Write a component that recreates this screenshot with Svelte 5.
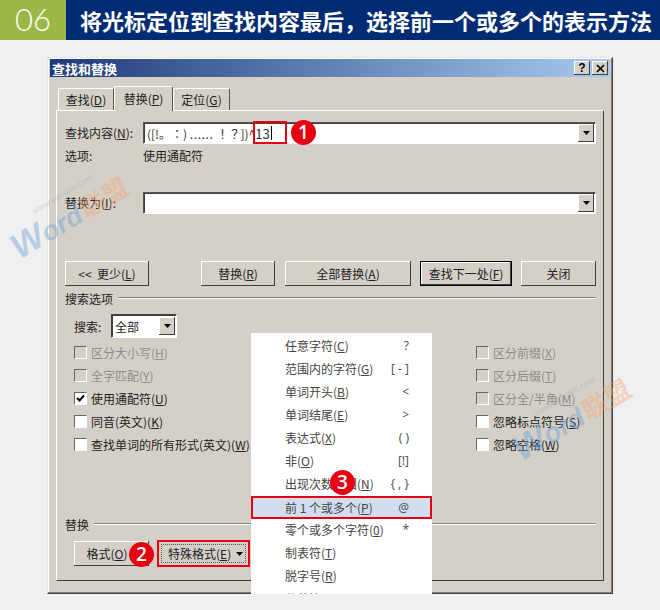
<script>
  const leftChecks = [
    { pre: '区分大小写(', key: 'H', disabled: true },
    { pre: '全字匹配(', key: 'Y', disabled: true },
    { pre: '使用通配符(', key: 'U', checked: true },
    { pre: '同音(英文)(', key: 'K' },
    { pre: '查找单词的所有形式(英文)(', key: 'W' }
  ]
  const rightChecks = [
    { pre: '区分前缀(', key: 'X', disabled: true },
    { pre: '区分后缀(', key: 'T', disabled: true },
    { pre: '区分全/半角(', key: 'M', disabled: true },
    { pre: '忽略标点符号(', key: 'S' },
    { pre: '忽略空格(', key: 'W' }
  ]
  const menuItems = [
    { pre: '任意字符(', key: 'C', code: '?' },
    { pre: '范围内的字符(', key: 'G', code: '[ - ]' },
    { pre: '单词开头(', key: 'B', code: '<' },
    { pre: '单词结尾(', key: 'E', code: '>' },
    { pre: '表达式(', key: 'X', code: '( )' },
    { pre: '非(', key: 'O', code: '[!]' },
    { pre: '出现次数范围(', key: 'N', code: '{ , }' },
    { pre: '前 1 个或多个(', key: 'P', code: '@', active: true },
    { pre: '零个或多个字符(', key: '0', code: '*' },
    { pre: '制表符(', key: 'T', code: '' },
    { pre: '脱字号(', key: 'R', code: '' },
    { pre: '分节符(', key: 'A', code: '' }
  ]
</script>

{#snippet arrow()}
  <svg class="arrow" width="9" height="5" viewBox="0 0 9 5"><path d="M0 0H9L4.5 5Z" fill="#000" /></svg>
{/snippet}

{#snippet dropBtn()}
  <span class="drop">{@render arrow()}</span>
{/snippet}

{#snippet check(item)}
  <label class="check" class:disabled={item.disabled}>
    <span class="box">
      {#if item.checked}
        <svg width="9" height="9" viewBox="0 0 9 9"><path d="M1 4L3.5 6.5L8 1.5" fill="none" stroke="#000" stroke-width="2" /></svg>
      {/if}
    </span>
    <span>{item.pre}<u>{item.key}</u>)</span>
  </label>
{/snippet}

{#snippet watermark(cls)}
  <div class="watermark {cls}">
    <div class="wm-url">www.wordlm.com</div>
    <div class="wm-logo"><span class="wm-w">W</span><span class="wm-ord">ord</span><span class="wm-cn">联盟</span></div>
  </div>
{/snippet}

<div class="page">
  <header class="top">
    <div class="step">06</div>
    <h1>将光标定位到查找内容最后，选择前一个或多个的表示方法</h1>
  </header>

  <div class="dialog">
    <div class="titlebar">
      <span class="title">查找和替换</span>
      <span class="tb-btn">?</span>
      <span class="tb-btn x">
        <svg width="9" height="9" viewBox="0 0 9 9"><path d="M1 1L8 8M8 1L1 8" stroke="#000" stroke-width="1.6" /></svg>
      </span>
    </div>

    <div class="tabs">
      <div class="tab first">查找(<u>D</u>)</div>
      <div class="tab active">替换(<u>P</u>)</div>
      <div class="tab third">定位(<u>G</u>)</div>
    </div>

    <div class="panel">
      <div class="row find">
        <span class="lbl">查找内容(<u>N</u>):</span>
        <div class="input">
          <span class="value">([!。<span class="tc">：</span>)&nbsp;<span class="dots">......</span><span class="tc">！？</span>])^<span class="num">13</span></span><span class="caret"></span>
          {@render dropBtn()}
        </div>
      </div>
      <div class="row opts">
        <span class="lbl">选项:</span>
        <span class="opt-val">使用通配符</span>
      </div>
      <div class="row repl">
        <span class="lbl">替换为(<u>I</u>):</span>
        <div class="input">
          {@render dropBtn()}
        </div>
      </div>

      <div class="actions">
        <button class="less">&lt;&lt;&nbsp; 更少(<u>L</u>)</button>
        <button class="replace">替换(<u>R</u>)</button>
        <button class="replace-all">全部替换(<u>A</u>)</button>
        <button class="next">查找下一处(<u>F</u>)</button>
        <button class="close">关闭</button>
      </div>

      <div class="section s1"><span>搜索选项</span><i></i></div>

      <div class="search">
        <span class="search-lbl">搜索:</span>
        <div class="combo"><span>全部</span>{@render dropBtn()}</div>
      </div>

      <div class="checks">
        <div class="col left">
          {#each leftChecks as item}
            {@render check(item)}
          {/each}
        </div>
        <div class="col">
          {#each rightChecks as item}
            {@render check(item)}
          {/each}
        </div>
      </div>

      <div class="section s2"><span>替换</span><i></i></div>

      <div class="bottom-btns">
        <button class="fmt">格式(<u>O</u>)</button>
        <div class="special-wrap">
          <button class="special"><span class="focus">特殊格式(<u>E</u>)</span>{@render arrow()}</button>
        </div>
      </div>
    </div>
  </div>

  <!-- overlays -->
  {@render watermark('wm-a')}
  {@render watermark('wm-b')}

  <div class="menu">
    {#each menuItems as item}
      <div class="item" class:active={item.active}>
        <span>{item.pre}<u>{item.key}</u>)</span>
        <span class="code">{item.code}</span>
      </div>
    {/each}
  </div>

  <div class="mark" style="left:253px;top:121px;width:34px;height:23px"></div>
  <div class="badge" style="left:291px;top:120px">1</div>
  <div class="badge" style="left:129px;top:542px">2</div>
  <div class="badge" style="left:330px;top:470px">3</div>
</div>

<style>
  :global(body) {
    margin: 0;
    background: #f0f0f0;
  }
  .page {
    position: relative;
    width: 660px;
    height: 610px;
    overflow: hidden;
    background: #f0f0f0;
    font-family: "Noto Sans CJK SC", "Noto Sans", sans-serif;
    font-size: 12px;
    color: #222;
  }
  u {
    text-underline-offset: 1px;
  }
  .top {
    display: flex;
    height: 40px;
    background: #012b72;
  }
  .step {
    width: 66px;
    background: #9bb846;
    color: #fff;
    font-family: Lato, "Open Sans", sans-serif;
    font-weight: 300;
    font-size: 31px;
    line-height: 38px;
    text-align: center;
  }
  h1 {
    margin: 0 0 0 14px;
    color: #fff;
    font-size: 22px;
    font-weight: 700;
    line-height: 40px;
    white-space: nowrap;
  }

  .dialog {
    box-sizing: border-box;
    width: 566px;
    height: 537px;
    margin: 17px 0 0 47px;
    padding: 1px 2px 2px;
    background: #d4d0c8;
    border: 1px solid;
    border-color: #e8e6e0 #404040 #404040 #e8e6e0;
    box-shadow: inset -1px -1px 0 #808080, inset 1px 1px 0 #fff;
  }
  .titlebar {
    display: flex;
    align-items: center;
    height: 18px;
    padding: 0 2px 0 2px;
    background: linear-gradient(90deg, #1e3a7a, #a6caf0);
    color: #fff;
  }
  .title {
    flex: 1;
    font-weight: 700;
    font-size: 13px;
  }
  .tb-btn {
    display: flex;
    align-items: center;
    justify-content: center;
    box-sizing: border-box;
    width: 16px;
    height: 14px;
    margin-left: 2px;
    background: #d4d0c8;
    color: #000;
    font: 700 12px "Liberation Sans", sans-serif;
    box-shadow: inset -1px -1px 0 #404040, inset 1px 1px 0 #fff;
  }

  .tabs {
    display: flex;
    align-items: flex-end;
    height: 24px;
    margin: 9px 0 0 8px;
    position: relative;
    z-index: 1;
  }
  .tab {
    box-sizing: border-box;
    height: 22px;
    padding-top: 2px;
    text-align: center;
    border: 1px solid #fff;
    border-bottom: 0;
    border-right: 1px solid #555;
    border-radius: 2px 2px 0 0;
    background: #d4d0c8;
  }
  .tab.first {
    width: 56px;
  }
  .tab.active {
    width: 59px;
    height: 25px;
    margin-bottom: -1px;
    padding-top: 3px;
  }
  .tab.third {
    width: 57px;
  }

  .panel {
    box-sizing: border-box;
    width: 548px;
    height: 471px;
    margin-left: 6px;
    padding: 11px 7px 0 8px;
    border: 1px solid;
    border-color: #fff #404040 #404040 #fff;
  }
  .row {
    display: flex;
    align-items: center;
  }
  .lbl {
    width: 78px;
    flex: none;
    padding-bottom: 2px;
  }
  .opt-val {
    padding-bottom: 2px;
  }
  .opts {
    height: 18px;
    margin-top: 3px;
  }
  .repl {
    margin-top: 27px;
  }
  .input {
    position: relative;
    display: flex;
    align-items: center;
    box-sizing: border-box;
    width: 453px;
    height: 22px;
    padding-left: 3px;
    background: #fff;
    border: 1px solid;
    border-color: #555 #fff #fff #555;
    box-shadow: inset 1px 1px 0 #404040;
  }
  .value {
    white-space: pre;
    font-size: 12px;
    text-spacing-trim: space-all;
    color: #333;
  }
  .tc {
    font-family: "Noto Sans CJK TC", sans-serif;
  }
  .dots {
    letter-spacing: 0.6px;
    margin-right: 3px;
  }
  .num {
    font-size: 13px;
  }
  .caret {
    width: 1px;
    height: 14px;
    margin-left: 1px;
    background: #000;
  }
  .drop {
    position: absolute;
    right: 1px;
    top: 1px;
    display: flex;
    align-items: center;
    justify-content: center;
    box-sizing: border-box;
    width: 16px;
    height: 18px;
    background: #d4d0c8;
    box-shadow: inset -1px -1px 0 #404040, inset 1px 1px 0 #fff;
  }
  .arrow {
    flex: none;
    width: 7px;
    height: 4px;
  }

  .actions {
    display: flex;
    margin-top: 47px;
  }
  button {
    box-sizing: border-box;
    height: 25px;
    padding: 0;
    background: #d4d0c8;
    border: 0;
    font: inherit;
    color: #222;
    box-shadow: inset -1px -1px 0 #404040, inset 1px 1px 0 #fff;
  }
  .less {
    width: 84px;
  }
  .replace {
    width: 74px;
    margin-left: 52px;
  }
  .replace-all {
    width: 126px;
    margin-left: 10px;
  }
  .next {
    width: 92px;
    margin-left: 9px;
    outline: 1px solid #000;
    outline-offset: -1px;
    box-shadow: inset -2px -2px 0 #404040, inset 2px 2px 0 #fff;
  }
  .close {
    width: 75px;
    margin-left: 9px;
  }

  .section {
    display: flex;
    align-items: center;
    gap: 5px;
    height: 18px;
  }
  .section i {
    flex: 1;
    height: 0;
    border-top: 1px solid #808080;
    border-bottom: 1px solid #fff;
  }
  .s1 {
    margin-top: 3px;
  }
  .s2 {
    margin-top: 59px;
  }

  .search {
    display: flex;
    align-items: center;
    margin: 7px 0 0 9px;
  }
  .search-lbl {
    width: 37px;
  }
  .combo {
    position: relative;
    display: flex;
    align-items: center;
    box-sizing: border-box;
    width: 66px;
    height: 24px;
    padding-left: 3px;
    background: #fff;
    border: 1px solid;
    border-color: #404040 #fff #fff #404040;
    box-shadow: inset 1px 1px 0 #404040;
  }
  .combo .drop {
    top: 2px;
    right: 1px;
  }

  .checks {
    display: flex;
    margin: 3px 0 0 9px;
  }
  .col {
    display: flex;
    flex-direction: column;
  }
  .col.left {
    width: 402px;
  }
  .check {
    display: flex;
    align-items: center;
    gap: 4px;
    height: 23px;
    white-space: nowrap;
  }
  .check.disabled {
    color: #8c8c8c;
  }
  .box {
    display: flex;
    align-items: center;
    justify-content: center;
    box-sizing: border-box;
    width: 13px;
    height: 13px;
    background: #fff;
    border: 1px solid;
    border-color: #666 #fff #fff #666;
  }
  .disabled .box {
    background: #d4d0c8;
  }

  .bottom-btns {
    display: flex;
    align-items: center;
    margin: 7px 0 0 9px;
  }
  .fmt {
    width: 75px;
    padding-right: 9px;
  }
  .special-wrap {
    box-sizing: border-box;
    width: 93px;
    height: 27px;
    margin-left: 8px;
    border: 2px solid #e60012;
  }
  .special {
    display: flex;
    align-items: center;
    justify-content: space-between;
    width: 100%;
    height: 100%;
    padding: 2px 5px 2px 3px;
    box-shadow: none;
  }
  .focus {
    display: block;
    padding: 0 14px 0 6px;
    margin-right: -10px;
    line-height: 17px;
    white-space: nowrap;
    outline: 1px dotted #555;
  }

  .menu {
    position: absolute;
    z-index: 3;
    left: 251px;
    top: 333px;
    box-sizing: border-box;
    width: 181px;
    height: 261px;
    padding-top: 2px;
    overflow: hidden;
    background: #fff;
    color: #444;
  }
  .item {
    box-sizing: border-box;
    display: flex;
    justify-content: space-between;
    align-items: center;
    height: 23px;
    padding: 0 23px 2px 34px;
    white-space: nowrap;
  }
  .item.active {
    padding: 0 21px 0 32px;
    background: #d2deef;
    border: 2px solid #e60012;
  }
  .code {
    font-family: "Noto Sans", sans-serif;
    color: #555;
  }

  .mark {
    position: absolute;
    z-index: 4;
    box-sizing: border-box;
    border: 2px solid #e60012;
  }
  .badge {
    position: absolute;
    z-index: 5;
    width: 25px;
    height: 25px;
    border-radius: 50%;
    background: #e60012;
    color: #fff;
    font: 600 19px/25px "Open Sans", sans-serif;
    text-align: center;
  }

  .watermark {
    position: absolute;
    z-index: 2;
    width: 150px;
    height: 44px;
    transform: rotate(-31deg);
    transform-origin: left bottom;
    pointer-events: none;
  }
  .wm-a {
    left: 22px;
    top: 220px;
  }
  .wm-b {
    left: 524px;
    top: 422px;
  }
  .wm-url {
    margin-left: 36px;
    font: 9px/10px "Liberation Sans", sans-serif;
    color: rgba(120, 120, 120, 0.25);
  }
  .wm-logo {
    display: flex;
    align-items: baseline;
    white-space: nowrap;
    line-height: 34px;
  }
  .wm-w {
    font: italic 700 35px/34px "Liberation Sans", sans-serif;
    color: rgba(110, 160, 215, 0.45);
  }
  .wm-ord {
    font: italic 700 27px/34px "Liberation Sans", sans-serif;
    color: rgba(110, 160, 215, 0.45);
  }
  .wm-cn {
    font-size: 26px;
    font-weight: 700;
    margin-left: 2px;
    color: rgba(240, 170, 120, 0.45);
  }
</style>
